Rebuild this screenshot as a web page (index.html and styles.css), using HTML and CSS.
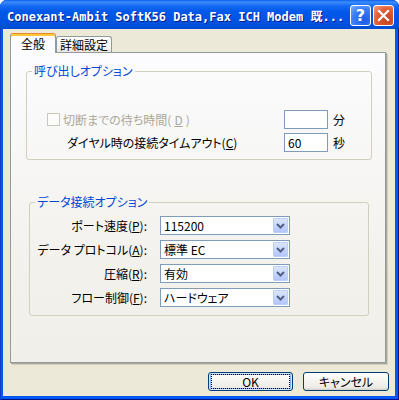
FILE: index.html
```html
<!DOCTYPE html>
<html lang="ja">
<head>
    <meta charset="UTF-8">
    <title>モデムのプロパティ</title>
    <link rel="stylesheet" href="styles.css">
</head>
<body>
    <div class="window">
        <!-- Title bar -->
        <div class="titlebar">
            <span class="title">Conexant-Ambit SoftK56 Data,Fax ICH Modem 既...</span>
            <div class="caption-buttons">
                <span class="cap help">?</span>
                <span class="cap close">
                    <svg width="13" height="13" viewBox="0 0 13 13">
                        <path d="M2 2 L11 11 M11 2 L2 11" stroke="#fff" stroke-width="2.2" stroke-linecap="square"/>
                    </svg>
                </span>
            </div>
        </div>

        <div class="client">
            <div class="tabs">
                <span class="tab active">全般</span>
                <span class="tab">詳細設定</span>
            </div>

            <div class="panel">
                <!-- Dial options -->
                <fieldset class="group group-call">
                    <legend>呼び出しオプション</legend>
                    <div class="call-grid">
                        <label class="check disabled"><span class="box"></span>切断までの待ち時間(<u>D</u>)</label>
                        <span class="edit"></span>
                        <span class="unit">分</span>

                        <label class="timeout">ダイヤル時の接続タイムアウト(<u>C</u>)</label>
                        <span class="edit">60</span>
                        <span class="unit">秒</span>
                    </div>
                </fieldset>

                <!-- Data connection options -->
                <fieldset class="group group-data">
                    <legend>データ接続オプション</legend>
                    <div class="field">
                        <label>ポート速度(<u>P</u>):</label>
                        <div class="combo"><span class="value">115200</span><span class="drop"><svg width="9" height="6" viewBox="0 0 9 6"><path d="M1 1 L4.5 4.5 L8 1" fill="none" stroke="#4d6185" stroke-width="2"/></svg></span></div>
                    </div>
                    <div class="field">
                        <label>データ プロトコル(<u>A</u>):</label>
                        <div class="combo"><span class="value">標準 EC</span><span class="drop"><svg width="9" height="6" viewBox="0 0 9 6"><path d="M1 1 L4.5 4.5 L8 1" fill="none" stroke="#4d6185" stroke-width="2"/></svg></span></div>
                    </div>
                    <div class="field">
                        <label>圧縮(<u>R</u>):</label>
                        <div class="combo"><span class="value">有効</span><span class="drop"><svg width="9" height="6" viewBox="0 0 9 6"><path d="M1 1 L4.5 4.5 L8 1" fill="none" stroke="#4d6185" stroke-width="2"/></svg></span></div>
                    </div>
                    <div class="field">
                        <label>フロー制御(<u>F</u>):</label>
                        <div class="combo"><span class="value">ハードウェア</span><span class="drop"><svg width="9" height="6" viewBox="0 0 9 6"><path d="M1 1 L4.5 4.5 L8 1" fill="none" stroke="#4d6185" stroke-width="2"/></svg></span></div>
                    </div>
                </fieldset>
            </div>

            <div class="buttons">
                <button class="btn default"><span>OK</span></button>
                <button class="btn">キャンセル</button>
            </div>
        </div>
    </div>
</body>
</html>
```
FILE: styles.css
```css
/* General */
body {
    margin: 0;
    font-family: "Noto Sans CJK JP", "Liberation Sans", sans-serif;
    font-size: 12px;
    font-feature-settings: "palt";
    color: #000;
    background: #fff;
}

.window {
    width: 399px;
    height: 400px;
    box-sizing: border-box;
    display: flex;
    flex-direction: column;
    background: #0558ee;
    border-radius: 7px 7px 0 0;
    box-shadow: inset 1px 0 0 #0a3fc8, inset 0 -1px 0 #00138c, inset -1px 0 0 #00138c;
}

/* Title bar */
.titlebar {
    height: 29px;
    display: flex;
    align-items: center;
    padding: 0 5px 0 7px;
    border-radius: 7px 7px 0 0;
    background: linear-gradient(#0a5fec 0, #3a8cfa 2px, #1569f3 6px, #0058e9 12px, #0054e3 20px, #0051dc 26px, #0049cf 29px);
}

.title {
    flex: 1;
    color: #fff;
    font-family: "DejaVu Sans Mono", "Noto Sans CJK JP", monospace;
    font-weight: bold;
    font-size: 12px;
    letter-spacing: 0;
    text-shadow: 1px 1px 0 #0a1883;
    white-space: nowrap;
    padding-top: 1px;
}

.caption-buttons {
    display: flex;
    gap: 2px;
    margin-top: 1px;
}

.cap {
    width: 19px;
    height: 19px;
    border: 1px solid #fff;
    border-radius: 3px;
    display: flex;
    align-items: center;
    justify-content: center;
    color: #fff;
}

.help {
    background: radial-gradient(circle at 70% 75%, #1c5ce8 0, #3c80f7 60%, #7eb0ff 100%);
    font-family: "DejaVu Sans", sans-serif;
    font-weight: bold;
    font-size: 16px;
}

.close {
    background: radial-gradient(circle at 70% 75%, #c4411d 0, #e2633b 60%, #f3a687 100%);
}

/* Client area */
.client {
    flex: 1;
    margin: 0 4px 4px 3px;
    background: #ece9d8;
    display: flex;
    flex-direction: column;
}

.tabs {
    display: flex;
    align-items: flex-end;
    height: 19px;
    margin: 4px 0 0 7px;
}

.tab {
    box-sizing: border-box;
    width: 56px;
    height: 16px;
    border: 1px solid #919b9c;
    border-bottom: none;
    border-radius: 3px 3px 0 0;
    background: linear-gradient(#fefefe, #f4f3ee 70%, #e7e6df);
    display: flex;
    align-items: center;
    justify-content: center;
    line-height: 14px;
}

.tab.active {
    position: relative;
    z-index: 1;
    width: 46px;
    height: 20px;
    margin-bottom: -1px;
    background: #fcfcfe;
    border-top: 1px solid #e68b2c;
    box-shadow: inset 0 2px 0 #ffc83c;
    padding-top: 1px;
}

.panel {
    box-sizing: border-box;
    width: 376px;
    height: 311px;
    margin-left: 7px;
    border: 1px solid #919b9c;
    background: linear-gradient(#fcfcfe, #f2f1ec 70%, #f0efe9);
    box-shadow: 1px 1px 0 #aca899, 2px 2px 0 #d0cdbd;
}

/* Group boxes */
.group {
    margin: 0;
    padding: 0;
    border: 1px solid #d0d0bf;
    border-radius: 3px;
    min-width: 0;
}

.group legend {
    margin-left: 5px;
    padding: 0 2px;
    color: #0046d5;
    line-height: 14px;
}

.group-call {
    width: 346px;
    box-sizing: border-box;
    margin: 11px 0 0 15px;
    padding: 32px 0 7px;
}

.group-data {
    width: 340px;
    box-sizing: border-box;
    margin: 35px 0 0 18px;
    padding: 7px 0 8px;
    display: flex;
    flex-direction: column;
    gap: 5px;
}

.call-grid {
    display: grid;
    grid-template-columns: 257px 44px auto;
    row-gap: 4px;
    align-items: center;
}

.check {
    display: flex;
    align-items: center;
    gap: 3px;
    padding-left: 20px;
}

.check .box {
    width: 11px;
    height: 11px;
    border: 1px solid #cac8bb;
    background: #fcfcfb;
}

.disabled {
    color: #aca899;
}

.timeout {
    padding-left: 40px;
}

.edit {
    box-sizing: border-box;
    height: 19px;
    border: 1px solid #7f9db9;
    background: #fff;
    padding: 0 3px;
    line-height: 17px;
}

.unit {
    padding-left: 5px;
}

.field {
    display: flex;
    align-items: center;
    height: 19px;
}

.field label {
    width: 117px;
    text-align: right;
    margin-right: 13px;
    white-space: nowrap;
}

.combo {
    box-sizing: border-box;
    width: 130px;
    height: 19px;
    border: 1px solid #7f9db9;
    background: #fff;
    display: flex;
    align-items: center;
    justify-content: space-between;
    padding: 1px;
}

.combo .value {
    padding-left: 2px;
    line-height: 15px;
}

.drop {
    box-sizing: border-box;
    width: 15px;
    height: 15px;
    border: 1px solid #bccdf6;
    border-radius: 1px;
    background: linear-gradient(#dbe6fe, #c3d4fc 60%, #b2c6f7);
    display: flex;
    align-items: center;
    justify-content: center;
}

/* Dialog buttons */
.buttons {
    display: flex;
    gap: 10px;
    margin: 9px 0 0 205px;
}

.btn {
    box-sizing: border-box;
    width: 86px;
    height: 19px;
    border: 1px solid #003c74;
    border-radius: 3px;
    background: linear-gradient(#ffffff, #f4f3ef 50%, #ecebe6 85%, #d6d0c5);
    font-family: inherit;
    font-size: 12px;
    font-feature-settings: "palt";
    padding: 0;
    line-height: 15px;
}

.btn.default {
    width: 85px;
    box-shadow: inset 0 0 0 1px #cee7ff, inset 0 0 0 2px #8fb0ee;
    display: flex;
    align-items: center;
    justify-content: center;
}

.btn.default span {
    box-sizing: border-box;
    width: 77px;
    height: 13px;
    outline: 1px dotted #000;
    line-height: 13px;
}
```
